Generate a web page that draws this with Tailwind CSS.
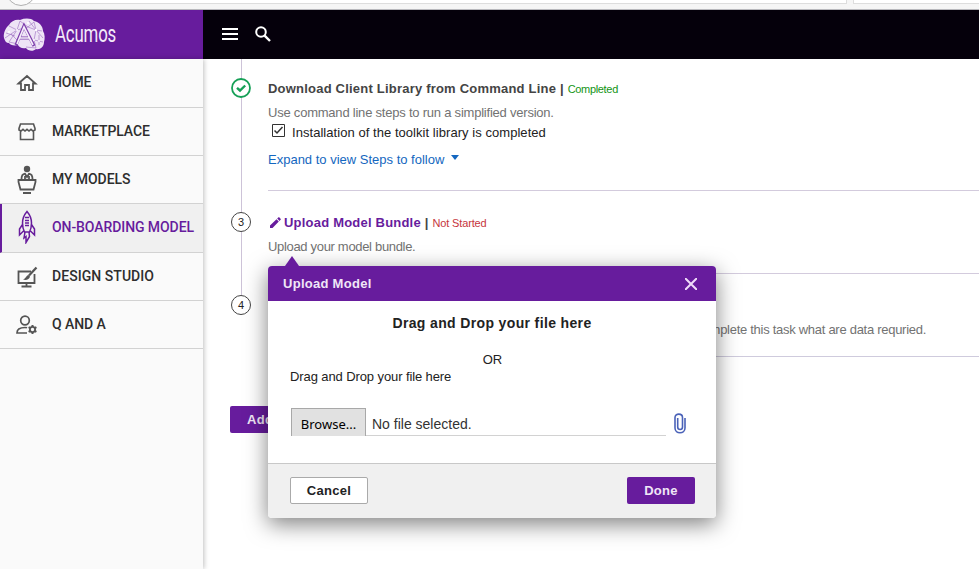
<!DOCTYPE html>
<html lang="en">
<head>
<meta charset="utf-8">
<title>Acumos</title>
<script src="https://cdn.jsdelivr.net/npm/@tailwindcss/browser@4"></script>
</head>
<body class="w-[979px] h-[569px] overflow-hidden bg-white font-['Liberation_Sans',Arial,sans-serif] text-[13px] text-[#222]">
<div class="flex h-[569px] flex-col overflow-hidden">
  <!-- browser toolbar edge -->
  <div class="relative h-[10px] shrink-0 overflow-hidden border-b border-[#b8b8bc] bg-[#f5f5f5]">
    <div class="flex h-[4px] gap-[6px] pl-[26px]">
      <div class="w-[821px] border-r border-b border-[#ddd] bg-white"></div>
      <div class="flex-1 border-l border-b border-[#ddd] bg-white"></div>
    </div>
    <div class="absolute left-[6px] -top-[24px] size-[30px] rounded-full border border-[#b0b0b0] bg-[#fafafa]"></div>
  </div>
  <header class="flex h-[49px] shrink-0 bg-[#05000b]">
    <div class="flex w-[203px] items-center bg-[#671c9d] pl-[3px] font-['Roboto',sans-serif]">
      <svg class="h-[34px] w-[43px]" viewBox="0 0 43 34" fill="none">
        <path d="M1 20C0 15 3 9 6 7C8 3 13 1 17 2C22 0 28 0 31 3C36 4 40 8 40 13C42 16 42 21 41 24C41 29 37 32 33 31C30 34 25 33 23 30C19 31 16 29 15 27C11 28 7 27 6 25C3 25 2 23 1 20Z" fill="#eee4f6"/>
        <g stroke="#9a6bc0" stroke-width=".6"><path d="M6 8L14 12L17 3L25 9L31 4L33 12L39 13M2 20L14 12L6 24M14 12L25 9L33 12L31 22L40 24M31 22L33 30L23 29M6 24L15 26M33 12L40 20M8 16L14 22M26 3L33 12M36 17L36 27M3 15L12 18"/></g>
        <path d="M13 27L21 8L31 28M17 20H26" stroke="#7c3cab" stroke-width="3.200"/>
        <path d="M14 26L21 9L30 27M17 20H26" stroke="#f5eefa" stroke-width="1.700"/>
        <g fill="#fff"><circle cx="14" cy="12" r="1"/><circle cx="6" cy="14" r="1"/><circle cx="33" cy="12" r="1.200"/><circle cx="31" cy="22" r="1"/><circle cx="36" cy="23" r="1"/><circle cx="25" cy="5" r="1"/></g>
      </svg>
      <span class="ml-[9px] inline-block origin-left scale-x-[.73] text-[23px] leading-none tracking-[-.2px] text-[#f3eaf9]">Acumos</span>
    </div>
    <svg class="ml-[19px] mt-[18px] h-[12px] w-[16px]" viewBox="0 0 16 12" fill="#fff"><path d="M0 0h16v2H0zM0 5h16v2H0zM0 10h16v2H0z"/></svg>
    <svg class="ml-[17px] mt-[16px] size-[16px]" viewBox="0 0 16 16" fill="none" stroke="#fff"><circle cx="6" cy="6" r="4.800" stroke-width="2"/><path d="M9.600 9.600L15 15" stroke-width="2.400"/></svg>
  </header>

  <div class="flex min-h-0 flex-1">
    <nav class="z-10 w-[203px] shrink-0 bg-[#fafafa] font-['Roboto',sans-serif] text-[14px] font-medium tracking-[-.08px] text-[#2e2e2e] shadow-[1px_0_5px_rgba(0,0,0,.25)]">
      <a class="flex h-[49px] items-center border-b border-[#d2d2d2] pl-[15px]">
        <svg class="size-[24px]" viewBox="0 0 24 24" fill="none" stroke="#555" stroke-width="1.800"><path d="M3.500 12.500L12 5L20.500 12.500H18V19H14V14H10V19H6V12.500Z"/></svg>
        <span class="-mt-px ml-[13px]">HOME</span>
      </a>
      <a class="flex h-[48px] items-center border-b border-[#d2d2d2] pl-[15px]">
        <svg class="size-[24px]" viewBox="0 0 24 24" fill="none" stroke="#555" stroke-width="1.600"><path d="M5.500 4H18.500L20 8.500V10L18 11L16 9.300L14 11L12 9.300L10 11L8 9.300L6 11L4 10V8.500ZM5.500 11V19.500H18.500V11"/></svg>
        <span class="ml-[13px]">MARKETPLACE</span>
      </a>
      <a class="flex h-[48px] items-center border-b border-[#d2d2d2] pl-[17px]">
        <svg class="h-[30px] w-[20px]" viewBox="0 0 20 30" fill="none" stroke="#555" stroke-width="1.800"><circle cx="10" cy="4" r="3.200" fill="#555" stroke="none"/><path d="M4.500 14C4.500 10 6 9 8 8.700L10 12L12 8.700C14 9 15.500 10 15.500 14M8 11V14M12 11V14M1.500 15H18.500V17L16.500 24.500H3.500L1.500 17Z"/><path d="M6 28H14" stroke-width="2"/></svg>
        <span class="ml-[15px]">MY MODELS</span>
      </a>
      <a class="flex h-[49px] items-center border-b border-l-2 border-b-[#d2d2d2] border-l-[#671c9d] bg-[#f0f0f0] pl-[16px] text-[#671c9d]">
        <svg class="-mt-[2px] h-[34px] w-[18px]" viewBox="0 0 18 34" fill="none" stroke="#671c9d" stroke-width="1.500"><path d="M9 1.500C6 5 4.500 9 4.500 13C4.500 17 5.500 20 6.500 22H11.500C12.500 20 13.500 17 13.500 13C13.500 9 12 5 9 1.500ZM7 7.500H11M7 10.500H11M7 13H11M7 15.500H11M4.500 14.500L1.500 19V25L5.500 21M13.500 14.500L16.500 19V25L12.500 21M7 22L6 28L8 26.500V32.500L11.500 26.500L11 22"/></svg>
        <span class="-mt-px ml-[16px]">ON-BOARDING MODEL</span>
      </a>
      <a class="flex h-[48px] items-center border-b border-[#d2d2d2] pl-[16px]">
        <svg class="h-[22px] w-[22px]" viewBox="0 0 22 22" fill="none" stroke="#555" stroke-width="1.800"><path d="M15 5.500H2.500V17H18.500V8M10.500 17V20M5.500 20.500H15.500"/><path d="M20.500 1.500L13 9.500" stroke-width="2.200"/><path d="M12.500 9C10 9.500 10.500 12 7 13.500C10 14.500 13.500 13.500 14 10.500Z" fill="#555" stroke="none"/></svg>
        <span class="ml-[14px] tracking-[.05px]">DESIGN STUDIO</span>
      </a>
      <a class="flex h-[48px] items-center border-b border-[#d2d2d2] pl-[16px]">
        <svg class="h-[20px] w-[22px]" viewBox="0 0 22 20" fill="none" stroke="#555" stroke-width="1.700"><circle cx="9" cy="5.500" r="4.300"/><path d="M11 18H1C1 14 4 12.500 9 12.500C10 12.500 10.500 12.500 11 12.800"/><circle cx="16.500" cy="14.500" r="2.600" stroke-width="1.800"/><path stroke-width="2" d="M16.500 10V12M16.500 17V19M12.600 12.200L14.300 13.200M18.700 15.800L20.400 16.800M12.600 16.800L14.300 15.800M18.700 13.200L20.400 12.200"/></svg>
        <span class="ml-[14px]">Q AND A</span>
      </a>
    </nav>

    <main class="relative flex-1 pl-[27px]">
      <div class="absolute left-[38px] top-0 h-[236px] w-px bg-[#cdc3d8]"></div>
      <section class="flex h-[132px] pl-px pt-[19px]">
        <svg class="relative size-[20px] shrink-0" viewBox="0 0 20 20" fill="none" stroke="#16a057"><circle cx="10" cy="10" r="9" fill="#fff" stroke-width="1.800"/><path d="M6 9.800L9 12.500L14.200 7.500" stroke-width="2.400"/></svg>
        <div class="ml-[17px] flex-1 border-b border-[#d3cbdd]">
          <h2 class="flex h-[22px] items-center whitespace-pre text-[13px] font-bold tracking-[.21px] text-[#444]"><span>Download Client Library from Command Line</span> | <span class="pt-px text-[11px] font-normal tracking-[-.32px] text-[#149414]">Completed</span></h2>
          <p class="h-[22px] pt-[4px] leading-[18px] tracking-[-.22px] text-[#727272]">Use command line steps to run a simplified version.</p>
          <label class="flex h-[20px] items-center pl-[4px]"><svg class="-mt-[3px] size-[13px]" viewBox="0 0 13 13" fill="none" stroke="#333"><path d="M.5.5H12.500V12.500H.5Z"/><path d="M2.500 6.500L5 9L10.500 3" stroke-width="1.500"/></svg><span class="ml-[7px] pt-px tracking-[.05px]">Installation of the toolkit library is completed</span></label>
          <a class="flex h-[34px] items-center text-[#1467c0]"><span class="pt-[2px]">Expand to view Steps to follow</span><i class="-mt-[3px] ml-[7px] border-x-4 border-t-[5px] border-x-transparent border-t-[#1467c0]"></i></a>
        </div>
      </section>
      <section class="flex h-[83px] pl-px pt-[21px]">
        <span class="relative flex size-[20px] shrink-0 items-center justify-center rounded-full border-[1.5px] border-[#444] bg-white text-[11px]">3</span>
        <div class="ml-[17px] flex-1 border-b border-[#d3cbdd]">
          <h2 class="flex h-[21px] items-center whitespace-pre pl-[2px] text-[13px] font-bold tracking-[.21px] text-[#444]"><svg class="mr-[3px] size-[11px]" viewBox="0 0 11 11" fill="#671c9d"><path d="M0 11V8.500L6.500 2.300L8.800 4.600L2.500 11ZM7.200 1.600L8.500.3H9.200L10.800 1.900V2.600L9.500 3.900Z"/></svg><span class="text-[#671c9d]">Upload Model Bundle</span> | <span class="pt-px text-[11px] font-normal tracking-[-.13px] text-[#c6353c]">Not Started</span></h2>
          <p class="pt-[5px] leading-[18px] tracking-[-.32px] text-[#727272]">Upload your model bundle.</p>
        </div>
      </section>
      <section class="flex h-[83px] pl-px pt-[21px]">
        <span class="relative flex size-[20px] shrink-0 items-center justify-center rounded-full border-[1.5px] border-[#444] bg-white text-[11px]">4</span>
        <div class="ml-[17px] flex flex-1 justify-end border-b border-[#cfcbdd] pr-[53px] pt-[26px]">
          <p class="whitespace-nowrap leading-[18px] tracking-[-.28px] text-[#727272]">complete this task what are data requried.</p>
        </div>
      </section>
      <button class="mt-[49px] flex h-[27px] w-[90px] items-center rounded-[2px] bg-[#671c9d] pl-[17px] text-[13px] font-bold tracking-[.3px] text-[#f0e6f7]"><span class="pt-px">Add</span></button>

      <!-- upload dialog -->
      <div class="absolute left-[65px] top-[207px] h-[252px] w-[448px] rounded-[4px] bg-white shadow-[0_6px_22px_rgba(0,0,0,.5)]">
        <i class="absolute left-[17px] -top-[10px] border-x-[7px] border-b-[10px] border-x-transparent border-b-[#671c9d]"></i>
        <div class="flex h-[35px] items-center justify-between rounded-t-[4px] bg-[#671c9d] pl-[15px] pr-[19px] text-[13px] font-bold tracking-[.28px] text-[#f0e6f7]"><span>Upload Model</span>
          <svg class="size-[12px]" viewBox="0 0 12 12" stroke="#f0dcfa" stroke-width="2"><path d="M0 0L12 12M12 0L0 12"/></svg>
        </div>
        <div class="flex h-[162px] flex-col px-[22px] pt-[13px]">
          <h3 class="h-[18px] self-center text-[14px] font-bold leading-[18px] tracking-[.36px]">Drag and Drop your file here</h3>
          <p class="mt-[18px] h-[18px] self-center pl-px leading-[20px]">OR</p>
          <p class="h-[17px] leading-[17px] tracking-[-.1px]">Drag and Drop your file here</p>
          <div class="ml-px mt-[22px] flex h-[29px] items-end">
            <div class="flex h-[28px] w-[375px] border-b border-[#d2d2d2]">
              <span class="flex h-[28px] w-[75px] items-center justify-center border border-b-0 border-[#a8a8a8] bg-[#e1e1e1] pt-[4px] font-['Noto_Sans',sans-serif] text-[13px] text-black">Browse...</span>
              <span class="ml-[6px] pt-[7px] text-[14px] leading-[18px] text-[#333]">No file selected.</span>
            </div>
            <svg class="mb-[2px] ml-[8px] h-[21px] w-[12px]" viewBox="0 0 12 21" fill="none" stroke="#4a62b8" stroke-width="1.600"><path d="M11 5V15C11 21.300 1 21.300 1 15V4.500C1 0 8.500 0 8.500 4.500V14C8.500 17.300 3.700 17.300 3.700 14V5"/></svg>
          </div>
        </div>
        <div class="flex h-[55px] items-start justify-between rounded-b-[4px] border-t border-[#c8c8c8] bg-[#f0f0f0] pl-[22px] pr-[21px] pt-[13px] text-[13px] font-bold tracking-[.28px]">
          <button class="h-[27px] w-[78px] rounded-[2px] border border-[#aaa] bg-white pt-px">Cancel</button>
          <button class="h-[27px] w-[68px] rounded-[2px] bg-[#671c9d] pt-px text-[#f0e6f7]">Done</button>
        </div>
      </div>
    </main>
  </div>
</div>
</body>
</html>
